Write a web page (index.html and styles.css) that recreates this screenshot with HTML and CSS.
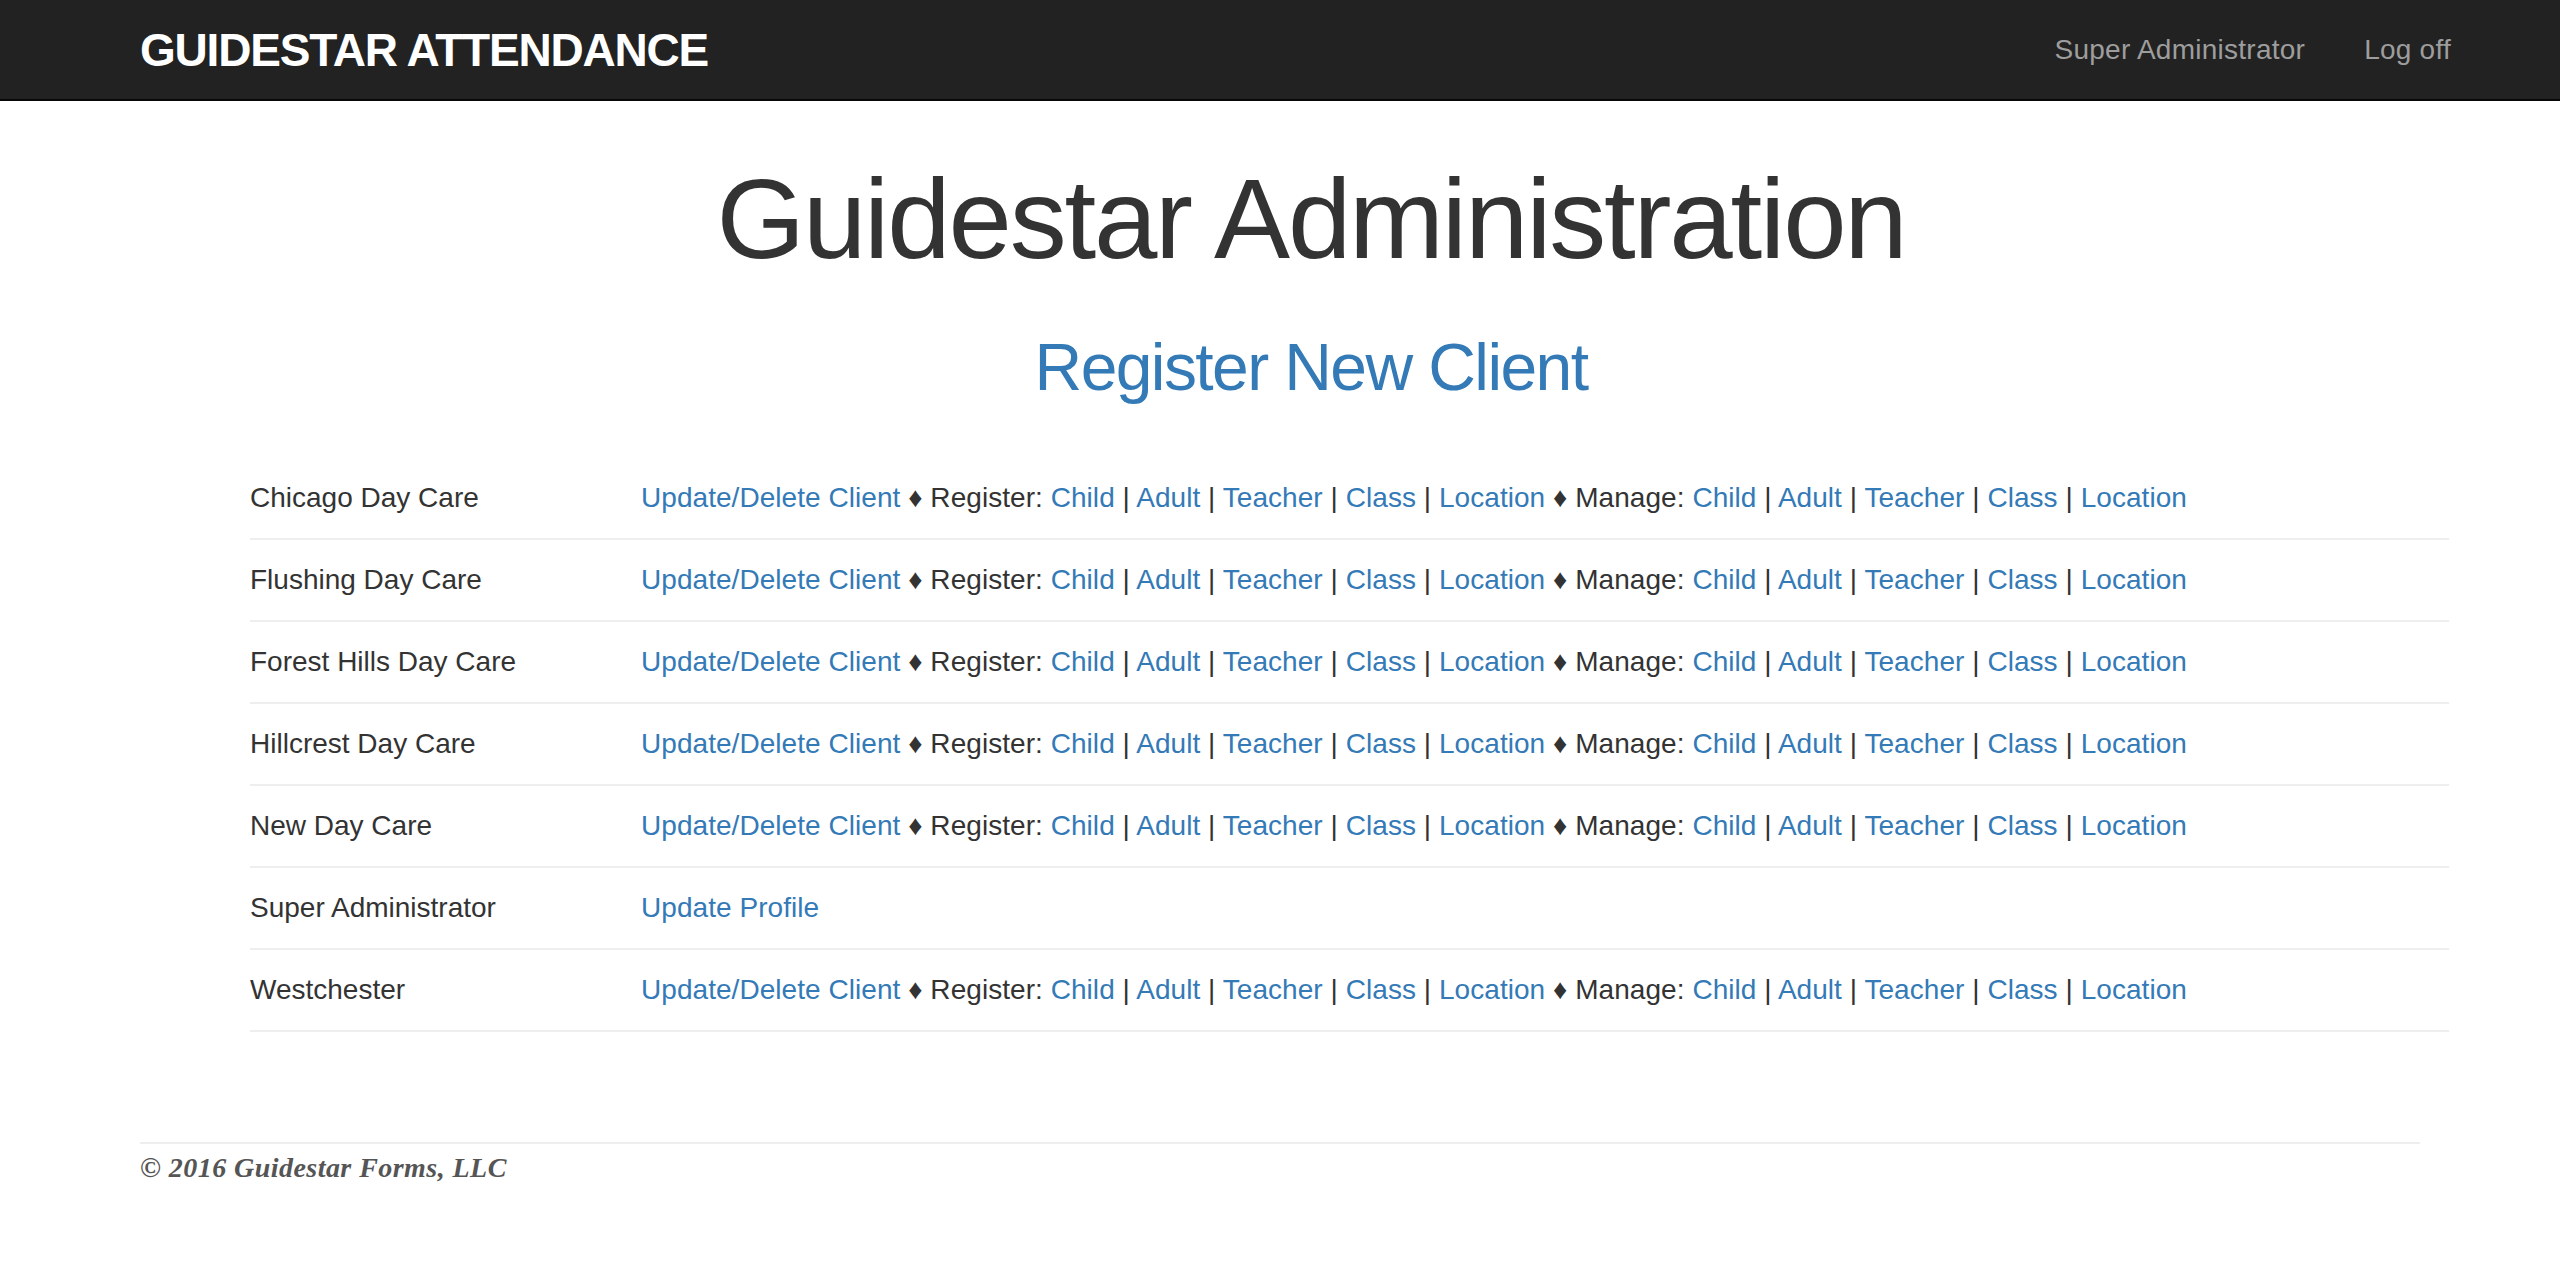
FILE: index.html
```html
<!DOCTYPE html>
<html lang="en">
<head>
<meta charset="utf-8">
<title>Guidestar Administration</title>
<link rel="stylesheet" href="styles.css">
</head>
<body>
<header class="navbar">
  <div class="nav-inner">
    <a class="brand" href="#">GUIDESTAR ATTENDANCE</a>
    <nav class="nav-right">
      <a href="#">Super Administrator</a>
      <a href="#">Log off</a>
    </nav>
  </div>
</header>
<main class="container">
  <div class="hero">
    <h1 class="title">Guidestar Administration</h1>
    <h2 class="register"><a href="#">Register New Client</a></h2>
  </div>
  <table class="clients">
    <tbody>
      <tr>
        <td class="name">Chicago Day Care</td>
        <td class="actions"><a href="#">Update/Delete Client</a> ♦ Register: <a href="#">Child</a> | <a href="#">Adult</a> | <a href="#">Teacher</a> | <a href="#">Class</a> | <a href="#">Location</a> ♦ Manage: <a href="#">Child</a> | <a href="#">Adult</a> | <a href="#">Teacher</a> | <a href="#">Class</a> | <a href="#">Location</a></td>
      </tr>
      <tr>
        <td class="name">Flushing Day Care</td>
        <td class="actions"><a href="#">Update/Delete Client</a> ♦ Register: <a href="#">Child</a> | <a href="#">Adult</a> | <a href="#">Teacher</a> | <a href="#">Class</a> | <a href="#">Location</a> ♦ Manage: <a href="#">Child</a> | <a href="#">Adult</a> | <a href="#">Teacher</a> | <a href="#">Class</a> | <a href="#">Location</a></td>
      </tr>
      <tr>
        <td class="name">Forest Hills Day Care</td>
        <td class="actions"><a href="#">Update/Delete Client</a> ♦ Register: <a href="#">Child</a> | <a href="#">Adult</a> | <a href="#">Teacher</a> | <a href="#">Class</a> | <a href="#">Location</a> ♦ Manage: <a href="#">Child</a> | <a href="#">Adult</a> | <a href="#">Teacher</a> | <a href="#">Class</a> | <a href="#">Location</a></td>
      </tr>
      <tr>
        <td class="name">Hillcrest Day Care</td>
        <td class="actions"><a href="#">Update/Delete Client</a> ♦ Register: <a href="#">Child</a> | <a href="#">Adult</a> | <a href="#">Teacher</a> | <a href="#">Class</a> | <a href="#">Location</a> ♦ Manage: <a href="#">Child</a> | <a href="#">Adult</a> | <a href="#">Teacher</a> | <a href="#">Class</a> | <a href="#">Location</a></td>
      </tr>
      <tr>
        <td class="name">New Day Care</td>
        <td class="actions"><a href="#">Update/Delete Client</a> ♦ Register: <a href="#">Child</a> | <a href="#">Adult</a> | <a href="#">Teacher</a> | <a href="#">Class</a> | <a href="#">Location</a> ♦ Manage: <a href="#">Child</a> | <a href="#">Adult</a> | <a href="#">Teacher</a> | <a href="#">Class</a> | <a href="#">Location</a></td>
      </tr>
      <tr>
        <td class="name">Super Administrator</td>
        <td class="actions"><a href="#">Update Profile</a></td>
      </tr>
      <tr>
        <td class="name">Westchester</td>
        <td class="actions"><a href="#">Update/Delete Client</a> ♦ Register: <a href="#">Child</a> | <a href="#">Adult</a> | <a href="#">Teacher</a> | <a href="#">Class</a> | <a href="#">Location</a> ♦ Manage: <a href="#">Child</a> | <a href="#">Adult</a> | <a href="#">Teacher</a> | <a href="#">Class</a> | <a href="#">Location</a></td>
      </tr>
    </tbody>
  </table>
  <footer class="footer">
    <p>© 2016 Guidestar Forms, LLC</p>
  </footer>
</main>
</body>
</html>
```
FILE: styles.css
```css
html, body {
  margin: 0;
  padding: 0;
  background: #fff;
}

body {
  font-family: "Liberation Sans", Arial, Helvetica, sans-serif;
  font-size: 28px;
  line-height: 40px;
  color: #333;
}

a {
  color: #337ab7;
  text-decoration: none;
}

.navbar {
  background: #222;
  border-bottom: 2px solid #080808;
  height: 99px;
}

.nav-inner {
  height: 99px;
  display: flex;
  align-items: center;
  justify-content: space-between;
  padding: 0 109px 0 140px;
}

.brand {
  color: #fff;
  font-weight: bold;
  font-size: 46px;
  line-height: 40px;
  letter-spacing: -1.2px;
}

.nav-right {
  display: flex;
  gap: 59px;
}

.nav-right a {
  color: #9d9d9d;
  font-size: 28px;
  line-height: 40px;
  letter-spacing: 0.25px;
}

.container {
  width: 2280px;
  margin: 0 auto;
}

.hero {
  padding-left: 62px;
  text-align: center;
}

.title {
  margin: 55px 0 0;
  font-size: 114px;
  line-height: 125px;
  font-weight: normal;
  letter-spacing: -2.2px;
  color: #333;
}

.register {
  margin: 50px 0 0;
  font-size: 66px;
  line-height: 72px;
  font-weight: normal;
  letter-spacing: -1.6px;
}

.clients {
  margin: 55px -29px 0 110px;
  width: 2199px;
  border-collapse: collapse;
}

.clients td {
  padding: 20px 0;
  line-height: 40px;
  border-bottom: 2px solid #eee;
  vertical-align: top;
  white-space: nowrap;
}

.clients td.name {
  width: 391px;
}

.clients td.actions {
  letter-spacing: 0.05px;
}

.footer {
  margin-top: 110px;
  border-top: 2px solid #eee;
}

.footer p {
  margin: 4px 0 0;
  font-family: "Liberation Serif", Georgia, serif;
  font-weight: bold;
  font-style: italic;
  font-size: 28px;
  line-height: 40px;
  letter-spacing: 0.45px;
  color: #555;
}
```
